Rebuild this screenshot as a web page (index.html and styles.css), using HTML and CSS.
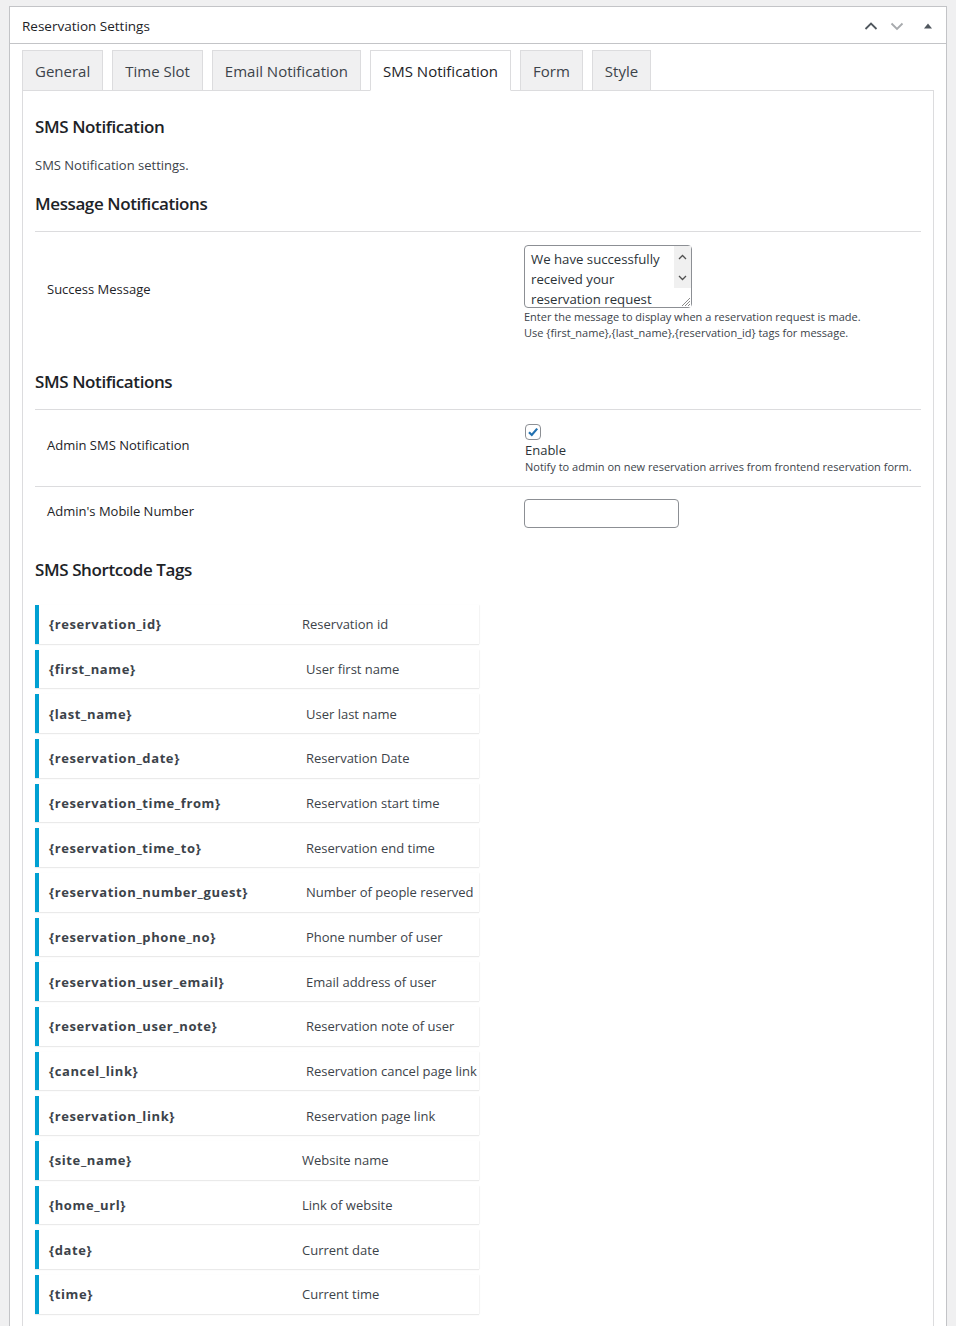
FILE: index.html
```html
<!DOCTYPE html>
<html lang="en">
<head>
<meta charset="utf-8">
<title>Reservation Settings</title>
<link rel="stylesheet" href="styles.css">
</head>
<body>
<div class="panel">
  <div class="panel-head">
    <h2 class="panel-title">Reservation Settings</h2>
    <div class="head-actions">
      <button class="icon-btn" aria-label="Move up"><svg width="14" height="14" viewBox="0 0 14 14"><path d="M1.5 10 L7 4.5 L12.5 10" fill="none" stroke="#50575e" stroke-width="1.8"/></svg></button>
      <button class="icon-btn" aria-label="Move down"><svg width="14" height="14" viewBox="0 0 14 14"><path d="M1.5 4.5 L7 10 L12.5 4.5" fill="none" stroke="#a7aaad" stroke-width="1.8"/></svg></button>
      <button class="icon-btn toggle" aria-label="Toggle panel"><svg width="10" height="10" viewBox="0 0 10 10"><path d="M1 7.5 L5 2.5 L9 7.5 Z" fill="#50575e"/></svg></button>
    </div>
  </div>
  <div class="panel-body">
    <nav class="tabs">
      <a class="tab">General</a>
      <a class="tab">Time Slot</a>
      <a class="tab">Email Notification</a>
      <a class="tab active">SMS Notification</a>
      <a class="tab">Form</a>
      <a class="tab">Style</a>
    </nav>
    <div class="tab-content">
      <h2 class="sec-title">SMS Notification</h2>
      <p class="sec-desc">SMS Notification settings.</p>
      <h3 class="sub-title">Message Notifications</h3>
      <div class="form-table">
        <div class="row row-msg">
          <div class="th">Success Message</div>
          <div class="td">
            <div class="ta-wrap">
              <textarea class="ta" rows="3">We have successfully received your reservation request</textarea>
              <div class="ta-scroll">
                <span class="sb-btn"><svg width="9" height="6" viewBox="0 0 9 6"><path d="M1 5 L4.5 1.5 L8 5" fill="none" stroke="#505050" stroke-width="1.3"/></svg></span>
                <span class="sb-btn"><svg width="9" height="6" viewBox="0 0 9 6"><path d="M1 1 L4.5 4.5 L8 1" fill="none" stroke="#505050" stroke-width="1.3"/></svg></span>
                <span class="sb-grip"><svg width="11" height="11" viewBox="0 0 11 11"><path d="M10 2 L2 10 M10 5 L5 10 M10 8 L8 10" stroke="#8a8a8a" stroke-width="1"/></svg></span>
              </div>
            </div>
            <p class="desc">Enter the message to display when a reservation request is made.<br>Use {first_name},{last_name},{reservation_id} tags for message.</p>
          </div>
        </div>
      </div>
      <h3 class="sub-title">SMS Notifications</h3>
      <div class="form-table">
        <div class="row row-check">
          <div class="th">Admin SMS Notification</div>
          <div class="td">
            <label class="check-label">
              <span class="checkbox"><svg width="12" height="12" viewBox="0 0 12 12"><path d="M2 6.2 L4.8 9 L10.2 2.6" fill="none" stroke="#2271b1" stroke-width="2.2"/></svg></span>
              <span class="check-text">Enable</span>
            </label>
            <p class="desc">Notify to admin on new reservation arrives from frontend reservation form.</p>
          </div>
        </div>
        <div class="row row-input">
          <div class="th">Admin's Mobile Number</div>
          <div class="td"><input class="text-input" type="text"></div>
        </div>
      </div>
      <h3 class="sub-title tags-title">SMS Shortcode Tags</h3>
      <div class="tags">
        <div class="tag"><code>{reservation_id}</code><span class="tag-desc">Reservation id</span></div>
        <div class="tag wide"><code>{first_name}</code><span class="tag-desc">User first name</span></div>
        <div class="tag wide"><code>{last_name}</code><span class="tag-desc">User last name</span></div>
        <div class="tag wide"><code>{reservation_date}</code><span class="tag-desc">Reservation Date</span></div>
        <div class="tag wide"><code>{reservation_time_from}</code><span class="tag-desc">Reservation start time</span></div>
        <div class="tag wide"><code>{reservation_time_to}</code><span class="tag-desc">Reservation end time</span></div>
        <div class="tag wide"><code>{reservation_number_guest}</code><span class="tag-desc">Number of people reserved</span></div>
        <div class="tag wide"><code>{reservation_phone_no}</code><span class="tag-desc">Phone number of user</span></div>
        <div class="tag wide"><code>{reservation_user_email}</code><span class="tag-desc">Email address of user</span></div>
        <div class="tag wide"><code>{reservation_user_note}</code><span class="tag-desc">Reservation note of user</span></div>
        <div class="tag wide"><code>{cancel_link}</code><span class="tag-desc">Reservation cancel page link</span></div>
        <div class="tag wide"><code>{reservation_link}</code><span class="tag-desc">Reservation page link</span></div>
        <div class="tag"><code>{site_name}</code><span class="tag-desc">Website name</span></div>
        <div class="tag"><code>{home_url}</code><span class="tag-desc">Link of website</span></div>
        <div class="tag"><code>{date}</code><span class="tag-desc">Current date</span></div>
        <div class="tag"><code>{time}</code><span class="tag-desc">Current time</span></div>
      </div>
    </div>
  </div>
</div>
</body>
</html>
```
FILE: styles.css
```css
* { box-sizing: border-box; }
html, body { margin: 0; padding: 0; }
body {
  background: #f0f0f1;
  font-family: "Open Sans", "Noto Sans", sans-serif;
  color: #3c434a;
  font-size: 13px;
  padding: 6px 9px 0 9px;
  height: 1326px;
  overflow: hidden;
}
.panel {
  width: 938px;
  background: #fff;
  border: 1px solid #c3c4c7;
  min-height: 1400px;
}
.panel-head {
  height: 37px;
  border-bottom: 1px solid #c3c4c7;
  display: flex;
  align-items: center;
  justify-content: space-between;
  padding: 1px 0 0 12px;
}
.panel-title {
  margin: 0;
  font-size: 13.5px;
  font-weight: 400;
  color: #1d2327;
}
.head-actions { display: flex; align-items: center; height: 100%; }
.icon-btn {
  background: none; border: 0; padding: 0; margin: 0;
  width: 26px; height: 36px;
  display: flex; align-items: center; justify-content: center;
}
.icon-btn.toggle { width: 36px; }
.panel-body { padding: 6px 12px 0 12px; }
.tabs { display: flex; gap: 9px; position: relative; z-index: 1; margin-bottom: -1px; }
.tab {
  display: block;
  height: 41px;
  line-height: 40px;
  padding: 0 12px;
  font-size: 15px;
  color: #3c434a;
  background: #f0f0f1;
  border: 1px solid #dcdcde;
}
.tab.active { background: #fff; color: #1d2327; border-bottom-color: #fff; }
.tab-content {
  border: 1px solid #dcdcde;
  padding: 12px 12px 40px 12px;
}
.sec-title {
  margin: 10px 0 0;
  font-size: 17px;
  letter-spacing: -0.4px;
  font-weight: 600;
  color: #1d2327;
  line-height: 28px;
}
.sec-desc { margin: 14px 0 0; font-size: 13px; line-height: 20px; color: #3c434a; }
.sub-title {
  margin: 15px 0 0;
  font-size: 17px;
  letter-spacing: -0.4px;
  font-weight: 600;
  color: #1d2327;
  line-height: 28px;
  padding-bottom: 13px;
}
.form-table { display: flex; flex-direction: column; }
.row {
  display: grid;
  grid-template-columns: 489px 1fr;
  align-items: center;
  border-top: 1px solid #dcdcde;
}
.th { padding: 0 0 6px 12px; color: #1d2327; font-size: 13px; }
.row-msg .th { padding-bottom: 8px; }
.row-msg .td { padding: 13px 0 12px; }
.row-check .td { padding: 14px 0 11px 1px; }
.row-input .td { padding: 12px 0 12px; }
.ta-wrap { position: relative; width: 168px; height: 63px; }
.ta {
  width: 168px; height: 63px;
  border: 1px solid #8c8f94;
  border-radius: 4px;
  font-family: inherit;
  font-size: 13.2px;
  line-height: 20px;
  color: #2c3338;
  padding: 3px 20px 0 6px;
  resize: none;
  overflow: hidden;
  display: block;
  margin: 0;
}
.ta-scroll {
  position: absolute;
  right: 1px; top: 1px; bottom: 1px;
  width: 17px;
  display: flex; flex-direction: column;
}
.sb-btn { height: 21px; display: flex; align-items: center; justify-content: center; background: #f0f0f0; }
.sb-grip { margin-top: auto; height: 15px; display: flex; align-items: flex-end; justify-content: flex-end; background: #fff; }
.desc { margin: 1px 0 0; font-size: 11px; line-height: 16px; color: #3c434a; }
.check-label { display: flex; flex-direction: column; align-items: flex-start; }
.checkbox {
  width: 16px; height: 16px;
  border: 1px solid #8c8f94;
  border-radius: 4px;
  display: flex; align-items: center; justify-content: center;
}
.check-text { font-size: 13px; line-height: 18px; margin-top: 1px; color: #2c3338; }
.row-check .desc { margin: 0; }
.text-input {
  width: 155px; height: 29px;
  border: 1px solid #8c8f94;
  border-radius: 4px;
  display: block; margin: 0;
}
.tags-title { margin-top: 16px; padding-bottom: 21px; }
.tags { display: flex; flex-direction: column; gap: 6px; }
.tag {
  width: 444px;
  height: 38.67px;
  border-left: 4px solid #00a0d2;
  box-shadow: 0 1px 1px rgba(0,0,0,.08), 1px 0 1px rgba(0,0,0,.03);
  display: grid;
  grid-template-columns: 253px 1fr;
  align-items: center;
  padding-left: 10px;
  background: #fff;
}
.tag.wide { grid-template-columns: 257px 1fr; }
.tag code {
  font-family: "Open Sans", "Noto Sans", sans-serif;
  font-weight: 700;
  font-size: 13px;
  letter-spacing: 0.6px;
  color: #3c434a;
}
.tag-desc { font-size: 13px; color: #3c434a; white-space: nowrap; }
```
